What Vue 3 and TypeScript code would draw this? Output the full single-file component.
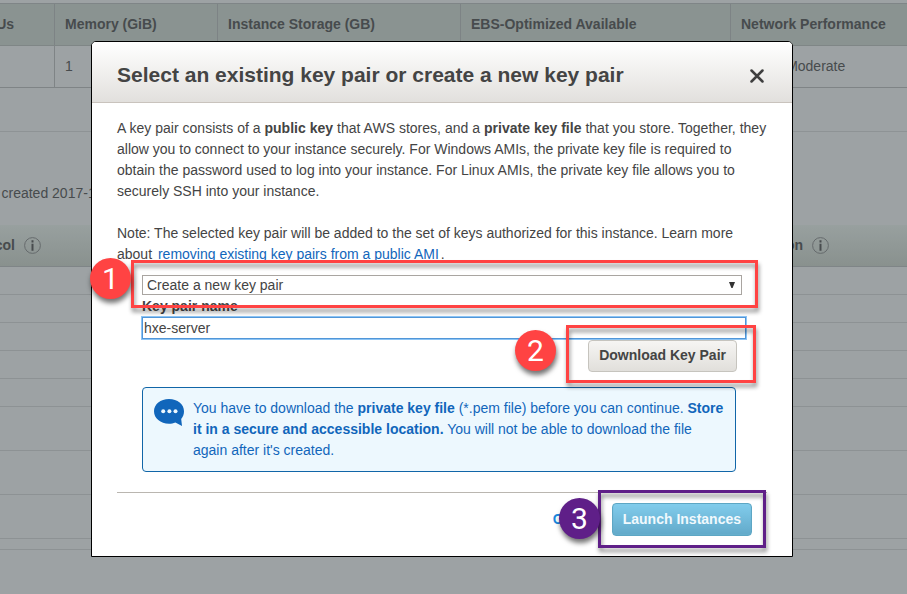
<script setup lang="ts">
import { ref } from 'vue'

interface Column { head: string; value: string; size: string }
interface Note { id: number; tone: string }

const columns: Column[] = [
  { head: 'vCPUs', value: '', size: 'c-cpu' },
  { head: 'Memory (GiB)', value: '1', size: 'c-mem' },
  { head: 'Instance Storage (GB)', value: '', size: 'c-store' },
  { head: 'EBS-Optimized Available', value: '', size: 'c-ebs' },
  { head: 'Network Performance', value: 'Low to Moderate', size: 'c-net' },
]
const shortRows: number[] = [1, 2, 3, 4, 5]
const tallRows: number[] = [1, 2, 3]
const marks: Note[] = [
  { id: 1, tone: 'red' },
  { id: 2, tone: 'red' },
  { id: 3, tone: 'purple' },
]
const keyName = ref<string>('hxe-server')
</script>

<template>
  <div class="page">
    <main class="backdrop">
      <div class="trow thead">
        <div v-for="c in columns" :key="c.head" class="cell" :class="c.size">{{ c.head }}</div>
      </div>
      <div class="trow">
        <div v-for="c in columns" :key="c.head" class="cell" :class="c.size">{{ c.value }}</div>
      </div>
      <div class="block"></div>
      <div class="created">created 2017-12</div>
      <div class="band">
        <div class="band-left">
          <span>Protocol</span>
          <svg class="info" viewBox="0 0 17 17"><circle cx="8.5" cy="8.5" r="7.9" /><path d="M8.5 3.200v2.200M8.5 6.800v7" /></svg>
        </div>
        <div class="band-right">
          <span>Description</span>
          <svg class="info" viewBox="0 0 17 17"><circle cx="8.5" cy="8.5" r="7.9" /><path d="M8.5 3.200v2.200M8.5 6.800v7" /></svg>
        </div>
      </div>
      <div v-for="n in shortRows" :key="n" class="line short"></div>
      <div v-for="n in tallRows" :key="'t' + n" class="line tall"></div>
      <div class="line last"></div>
    </main>

    <section class="modal">
      <header class="modal-head">
        <h1>Select an existing key pair or create a new key pair</h1>
        <svg class="close" viewBox="0 0 14 14"><path d="M1.5 1.5l11 11M12.5 1.5l-11 11" /></svg>
      </header>
      <div class="modal-body">
        <p>
          <span class="lead">A key pair consists of a <b>public key</b> that AWS stores, and a <b>private key file</b> that you store. Together, they</span><br />
          allow you to connect to your instance securely. For Windows AMIs, the private key file is required to<br />
          obtain the password used to log into your instance. For Linux AMIs, the private key file allows you to<br />
          securely SSH into your instance.
        </p>
        <p class="second">
          Note: The selected key pair will be added to the set of keys authorized for this instance. Learn more<br />
          about <a class="doc">removing existing key pairs from a public AMI</a>.
        </p>
        <div class="form">
          <div class="select">
            <span>Create a new key pair</span>
            <svg viewBox="0 0 6 6"><path d="M0 0h6L3.6 6H2.4z" /></svg>
          </div>
          <label class="label">Key pair name</label>
          <input v-model="keyName" class="field" type="text" />
          <div class="download-row"><button class="btn">Download Key Pair</button></div>
          <div class="alert">
            <svg class="bubble" viewBox="0 0 30 27">
              <path d="M15 0C23.5 0 30 5.2 30 12.2c0 3.1-1 5.6-2.8 7.7l.8 7-6.6-3.4c-2 .9-4.200 1.200-6.400 1.200C6.500 24.700 0 19.300 0 12.300 0 5.200 6.500 0 15 0z" />
              <circle cx="9.200" cy="12.300" r="2" /><circle cx="15.400" cy="12.300" r="2" /><circle cx="21.500" cy="12.300" r="2" />
            </svg>
            <p>
              You have to download the <b>private key file</b> (*.pem file) before you can continue. <b>Store</b><br />
              <b>it in a secure and accessible location.</b> You will not be able to download the file<br />
              again after it's created.
            </p>
          </div>
        </div>
        <footer class="actions">
          <a class="cancel">Cancel</a>
          <button class="btn primary">Launch Instances</button>
        </footer>
      </div>
    </section>

    <template v-for="m in marks" :key="m.id">
      <div class="frame" :class="[m.tone, 'frame-' + m.id]"></div>
      <div class="badge" :class="[m.tone, 'badge-' + m.id]">{{ m.id }}</div>
    </template>
  </div>
</template>

<style>
body { margin: 0; overflow: hidden; }
</style>

<style scoped>
* { box-sizing: border-box; }
.page {
  position: relative;
  width: 907px;
  height: 594px;
  overflow: hidden;
  background: #9da2a4;
  font: 14px/21px "Liberation Sans", Arial, sans-serif;
  color: #444;
}
.backdrop { padding-top: 3px; color: #474b4d; }
.trow { display: flex; height: 42px; margin-left: -41px; width: 960px; border-bottom: 1px solid #7f8486; }
.thead { height: 43px; background: #8a9391; font-weight: bold; border-top: 1px solid #7f8587; border-bottom-color: #7f8686; }
.cell { flex: none; padding: 10px 10px 0; border-right: 1px solid #7d8385; white-space: nowrap; }
.trow:not(.thead) .cell { border-right-color: #7f8486; }
.c-cpu { width: 96px; }
.c-mem { width: 163px; }
.c-store { width: 243px; }
.c-ebs { width: 270px; }
.c-net { width: 188px; }
.block { height: 44px; border-bottom: 1px solid #8e9395; }
.created { height: 93px; padding: 51px 0 0 1.5px; }
.band {
  display: flex;
  height: 42px;
  background: linear-gradient(#98a09f, #89918e);
  border-bottom: 1px solid #7f8587;
  font-weight: bold;
}
.band-left, .band-right { display: flex; align-items: center; justify-content: flex-end; gap: 9px; flex: none; }
.band-left { width: 41px; }
.band-right { width: 788px; }
.info { width: 17px; height: 17px; flex: none; fill: none; stroke: #666b6d; stroke-width: 1; }
.info path { stroke: #484c4e; stroke-width: 2; }
.line { border-bottom: 1px solid #8d9294; }
.short { height: 28px; }
.tall { height: 44px; }
.last { height: 11px; }

.modal {
  position: absolute;
  left: 91px;
  top: 41px;
  width: 702px;
  height: 516px;
  border: 1px solid #000;
  border-radius: 5px 5px 0 0;
  background: #fff;
  overflow: hidden;
}
.modal-head {
  display: flex;
  align-items: center;
  justify-content: space-between;
  height: 61px;
  padding: 5px 28px 0 25px;
  border-bottom: 1px solid #c9c3bd;
  background: linear-gradient(#fff, #e2e0dd);
}
h1 { margin: 0; font-size: 21px; line-height: 26px; font-weight: bold; white-space: nowrap; }
.close { width: 14px; height: 14px; margin-top: 2px; stroke: #3f3f3f; stroke-width: 2.5; stroke-linecap: round; }
.modal-body { padding: 15px 25px 0; }
p { margin: 0; white-space: nowrap; }
.lead { letter-spacing: 0.016px; }
.second { margin-top: 21px; }
.doc { color: #1166bb; margin: 0 2px 0 2px; }
.form { padding: 10px 25px 0; }
.select {
  display: flex;
  align-items: center;
  justify-content: space-between;
  width: 600px;
  height: 20px;
  padding: 0 6px 0 4px;
  border: 1px solid #a9a5a1;
  line-height: 18px;
}
.select svg { width: 6px; height: 6px; fill: #333; }
.label { display: block; height: 22px; padding-top: 1px; font-weight: bold; }
.field {
  display: block;
  width: 604px;
  height: 22px;
  margin: 0;
  padding: 0 1px;
  border: 1px solid #5196d8;
  outline: none;
  box-shadow: 0 0 0 1px #8cc4f5;
  background: #fff;
  font: inherit;
  line-height: 20px;
  color: #444;
}
.download-row { display: flex; justify-content: flex-end; width: 595px; padding-top: 1px; }
.btn {
  height: 32px;
  padding: 0 10px 2px;
  border: 1px solid #c6c4be;
  border-radius: 4px;
  background: linear-gradient(#f6f5f3, #e1dfdb);
  font: bold 14px/28px "Liberation Sans", Arial, sans-serif;
  color: #444;
  white-space: nowrap;
}
.alert {
  display: flex;
  gap: 9px;
  width: 594px;
  height: 85px;
  margin-top: 15px;
  padding: 10px 0 0 11px;
  border: 1px solid #1166a8;
  border-radius: 4px;
  background: #edf8fe;
  color: #1166bb;
}
.bubble { flex: none; width: 30px; height: 27px; margin-top: 1px; fill: #1166bb; }
.bubble circle { fill: #edf8fe; }
.actions {
  display: flex;
  align-items: center;
  justify-content: flex-end;
  gap: 13px;
  margin-top: 20px;
  padding: 10px 15px 0 0;
  border-top: 1px solid #bab6b0;
}
.cancel { color: #1a88dd; font-weight: bold; }
.primary {
  height: 33px;
  border-color: #5da6c4;
  background: linear-gradient(#81ccec, #62a9c9);
  box-shadow: inset 0 -1px 1px #67afcd;
  color: #f1f9fd;
}

.frame { position: absolute; border: 3px solid; filter: drop-shadow(1px 4px 2px rgba(0, 0, 0, 0.45)); }
.frame.red { border-color: #ff4343; }
.frame.purple { border-color: #5f1f88; }
.frame-1 { left: 131px; top: 260px; width: 627px; height: 48px; }
.frame-2 { left: 566px; top: 325px; width: 190px; height: 58px; }
.frame-3 { left: 598px; top: 490px; width: 168px; height: 58px; }
.badge {
  position: absolute;
  width: 41px;
  height: 41px;
  border-radius: 50%;
  color: #fff;
  font: 30px/41px Roboto, "Liberation Sans", sans-serif;
  text-align: center;
  box-shadow: 1px 4px 5px rgba(0, 0, 0, 0.55);
}
.badge.red { background: #ff4343; }
.badge.purple { background: #5f1f88; }
.badge-1 { left: 90px; top: 258px; }
.badge-2 { left: 515px; top: 330px; }
.badge-3 { left: 559px; top: 498px; }
</style>
